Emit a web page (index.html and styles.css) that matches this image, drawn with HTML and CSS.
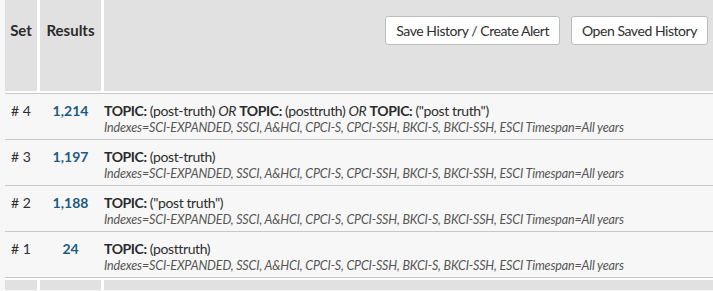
FILE: index.html
```html
<!DOCTYPE html>
<html lang="en">
<head>
    <meta charset="UTF-8">
    <title>Search History</title>
    <link rel="stylesheet" href="styles.css">
</head>
<body>

    <div id="history">
        <div class="head-row">
            <div class="head-cell">Set</div>
            <div class="head-cell">Results</div>
            <div class="head-cell actions">
                <button class="btn">Save History / Create Alert</button>
                <button class="btn">Open Saved History</button>
            </div>
        </div>

        <div class="set-row">
            <div class="set-num"># 4</div>
            <div class="set-count">1,214</div>
            <div class="set-query">
                <div class="query"><b>TOPIC:</b> (post-truth) <i>OR</i> <b>TOPIC:</b> (posttruth) <i>OR</i> <b>TOPIC:</b> ("post truth")</div>
                <div class="indexes">Indexes=SCI-EXPANDED, SSCI, A&amp;HCI, CPCI-S, CPCI-SSH, BKCI-S, BKCI-SSH, ESCI Timespan=All years</div>
            </div>
        </div>
        <div class="set-row">
            <div class="set-num"># 3</div>
            <div class="set-count">1,197</div>
            <div class="set-query">
                <div class="query"><b>TOPIC:</b> (post-truth)</div>
                <div class="indexes">Indexes=SCI-EXPANDED, SSCI, A&amp;HCI, CPCI-S, CPCI-SSH, BKCI-S, BKCI-SSH, ESCI Timespan=All years</div>
            </div>
        </div>
        <div class="set-row">
            <div class="set-num"># 2</div>
            <div class="set-count">1,188</div>
            <div class="set-query">
                <div class="query"><b>TOPIC:</b> ("post truth")</div>
                <div class="indexes">Indexes=SCI-EXPANDED, SSCI, A&amp;HCI, CPCI-S, CPCI-SSH, BKCI-S, BKCI-SSH, ESCI Timespan=All years</div>
            </div>
        </div>
        <div class="set-row">
            <div class="set-num"># 1</div>
            <div class="set-count">24</div>
            <div class="set-query">
                <div class="query"><b>TOPIC:</b> (posttruth)</div>
                <div class="indexes">Indexes=SCI-EXPANDED, SSCI, A&amp;HCI, CPCI-S, CPCI-SSH, BKCI-S, BKCI-SSH, ESCI Timespan=All years</div>
            </div>
        </div>

        <div class="foot-row">
            <div class="foot-cell"></div>
            <div class="foot-cell"></div>
            <div class="foot-cell"></div>
        </div>
    </div>

</body>
</html>
```

FILE: styles.css
```css
body {
    font-family: Lato, "Liberation Sans", sans-serif;
    background-color: #f7f7f7;
    color: #2e2e2e;
    margin: 0;
    padding: 0 0 0 5px;
    overflow: hidden;
}
.head-row, .foot-row {
    display: grid;
    grid-template-columns: 32px 61px 1fr;
    column-gap: 3px;
    background-color: #fff;
}
.head-row {
    padding-bottom: 2px;
    border-bottom: 1px solid #c8c8c8;
}
.foot-row {
    padding-top: 2px;
}
.head-cell {
    background-color: #e1e1e1;
    height: 91px;
    font-size: 15px;
    font-weight: bold;
    line-height: 20px;
    padding-top: 20px;
    box-sizing: border-box;
    text-align: center;
    color: #2b2b2b;
}
.foot-cell {
    background-color: #e1e1e1;
    height: 10px;
}
.actions {
    display: flex;
    justify-content: flex-end;
    align-items: flex-start;
    gap: 11px;
    padding: 16px 5px 0 0;
}
.btn {
    font-family: inherit;
    font-size: 14px;
    letter-spacing: -0.45px;
    color: #2e2e2e;
    background-color: #fff;
    border: 1px solid #bcbcbc;
    border-radius: 3px;
    height: 29px;
    padding: 0 10px;
}
.set-row {
    display: grid;
    grid-template-columns: 32px 61px 1fr;
    column-gap: 3px;
    padding: 8px 0 3px 0;
    border-bottom: 1px solid #c8c8c8;
    font-size: 14px;
    line-height: 17px;
}
.set-num {
    text-align: center;
}
.set-count {
    text-align: center;
    font-weight: bold;
    color: #1d5a80;
}
.query {
    letter-spacing: -0.4px;
}
.query b {
    color: #2b2b2b;
}
.indexes {
    font-size: 12.5px;
    font-style: italic;
    letter-spacing: -0.15px;
    line-height: 17px;
    color: #555;
}
```
